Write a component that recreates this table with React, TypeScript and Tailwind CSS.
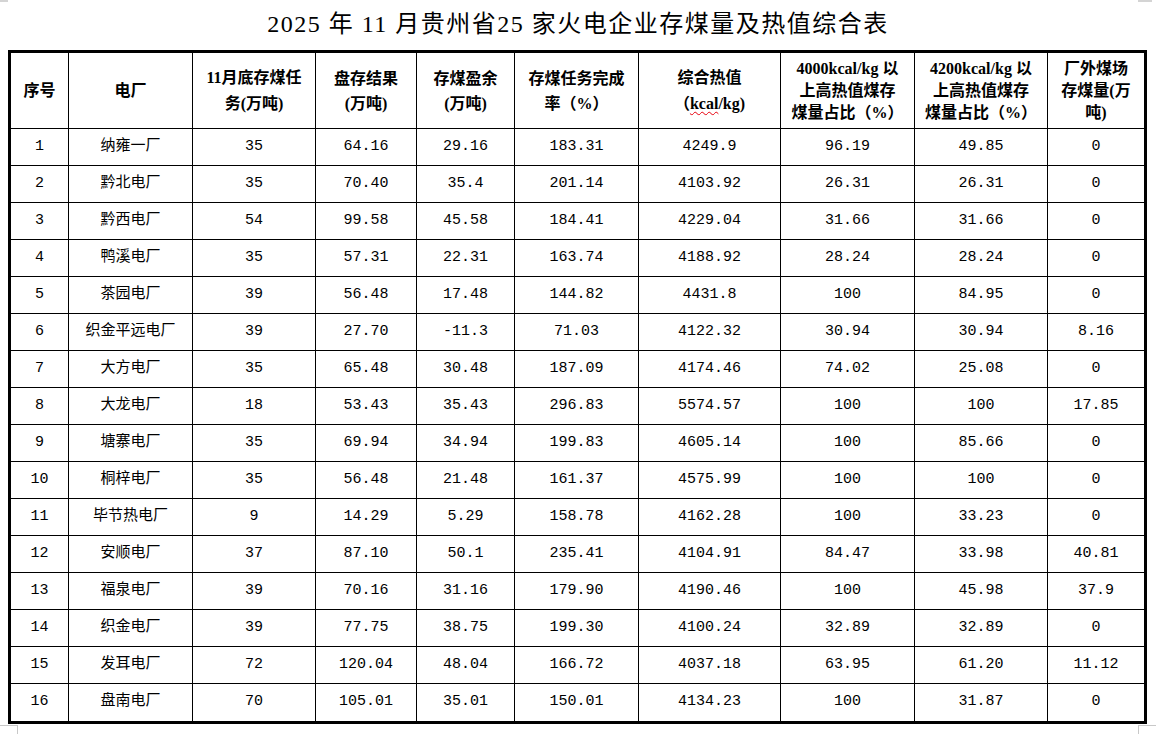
import React from "react";

const rows: string[][] = [
  ["1", "纳雍一厂", "35", "64.16", "29.16", "183.31", "4249.9", "96.19", "49.85", "0"],
  ["2", "黔北电厂", "35", "70.40", "35.4", "201.14", "4103.92", "26.31", "26.31", "0"],
  ["3", "黔西电厂", "54", "99.58", "45.58", "184.41", "4229.04", "31.66", "31.66", "0"],
  ["4", "鸭溪电厂", "35", "57.31", "22.31", "163.74", "4188.92", "28.24", "28.24", "0"],
  ["5", "茶园电厂", "39", "56.48", "17.48", "144.82", "4431.8", "100", "84.95", "0"],
  ["6", "织金平远电厂", "39", "27.70", "-11.3", "71.03", "4122.32", "30.94", "30.94", "8.16"],
  ["7", "大方电厂", "35", "65.48", "30.48", "187.09", "4174.46", "74.02", "25.08", "0"],
  ["8", "大龙电厂", "18", "53.43", "35.43", "296.83", "5574.57", "100", "100", "17.85"],
  ["9", "塘寨电厂", "35", "69.94", "34.94", "199.83", "4605.14", "100", "85.66", "0"],
  ["10", "桐梓电厂", "35", "56.48", "21.48", "161.37", "4575.99", "100", "100", "0"],
  ["11", "毕节热电厂", "9", "14.29", "5.29", "158.78", "4162.28", "100", "33.23", "0"],
  ["12", "安顺电厂", "37", "87.10", "50.1", "235.41", "4104.91", "84.47", "33.98", "40.81"],
  ["13", "福泉电厂", "39", "70.16", "31.16", "179.90", "4190.46", "100", "45.98", "37.9"],
  ["14", "织金电厂", "39", "77.75", "38.75", "199.30", "4100.24", "32.89", "32.89", "0"],
  ["15", "发耳电厂", "72", "120.04", "48.04", "166.72", "4037.18", "63.95", "61.20", "11.12"],
  ["16", "盘南电厂", "70", "105.01", "35.01", "150.01", "4134.23", "100", "31.87", "0"],
];

const headers: React.ReactNode[] = [
  <span className="leading-[25px]">序号</span>,
  <span className="leading-[25px]">电厂</span>,
  <span className="leading-[26px]">11月底存煤任<br />务(万吨)</span>,
  <span className="leading-[25px]">盘存结果<br />(万吨)</span>,
  <span className="leading-[25px]">存煤盈余<br />(万吨)</span>,
  <span className="leading-[25px]">存煤任务完成<br />率（%）</span>,
  <span className="leading-[26px]">
    综合热值
    <br />（<span className="underline decoration-wavy decoration-red-600 decoration-1 underline-offset-2">kcal</span>/kg)
  </span>,
  <span className="leading-[22px]">4000kcal/kg 以<br />上高热值煤存<br />煤量占比（%）</span>,
  <span className="leading-[22px]">4200kcal/kg 以<br />上高热值煤存<br />煤量占比（%）</span>,
  <span className="leading-[22px]">厂外煤场<br />存煤量(万<br />吨)</span>,
];

export default function App() {
  return (
    <div className="relative w-[1156px] h-[734px] bg-white overflow-hidden text-black">
      {/* page corner marks */}
      <div className="absolute left-0 top-0 w-[8px] h-[2px] bg-[#d4d4d4]" />
      <div className="absolute left-[1138px] top-0 w-[14px] h-[2px] bg-[#d4d4d4]" />
      <div className="absolute left-0 top-[725px] w-[18px] h-[9px] border-t border-r border-[#c8c8c8]" />
      <div className="absolute left-[1138px] top-[725px] w-[18px] h-[9px] border-t border-l border-[#c8c8c8]" />

      <div className="h-[50px] flex items-center justify-center pb-[3px]">
        <h1
          className="text-[24px] leading-none font-normal tracking-[1.5px]"
          style={{ fontFamily: '"Liberation Serif", "Noto Sans CJK SC", serif' }}
        >
          2025 年 11 月贵州省25 家火电企业存煤量及热值综合表
        </h1>
      </div>

      <div className="ml-[8px] w-[1139px] border-[3px] border-black">
        <div
          className="grid grid-cols-[58px_124px_123px_101px_98px_124px_142px_134px_133px_96px] font-bold text-[16px]"
          style={{ fontFamily: '"Liberation Serif", "Noto Sans CJK SC", serif' }}
        >
          {headers.map((h, i) => (
            <div
              key={i}
              className={`h-[76px] flex items-center justify-center text-center border-b border-black ${
                i < 9 ? "border-r" : ""
              }`}
            >
              {h}
            </div>
          ))}
        </div>
        {rows.map((r, ri) => (
          <div
            key={ri}
            className="grid grid-cols-[58px_124px_123px_101px_98px_124px_142px_134px_133px_96px] text-[15px]"
            style={{ fontFamily: '"Liberation Mono", "Noto Sans CJK SC", monospace' }}
          >
            {r.map((c, ci) => (
              <div
                key={ci}
                className={`h-[37px] flex items-center justify-center whitespace-nowrap border-black ${
                  ci < 9 ? "border-r" : ""
                } ${ri < rows.length - 1 ? "border-b" : ""}`}
              >
                {c}
              </div>
            ))}
          </div>
        ))}
      </div>
    </div>
  );
}
